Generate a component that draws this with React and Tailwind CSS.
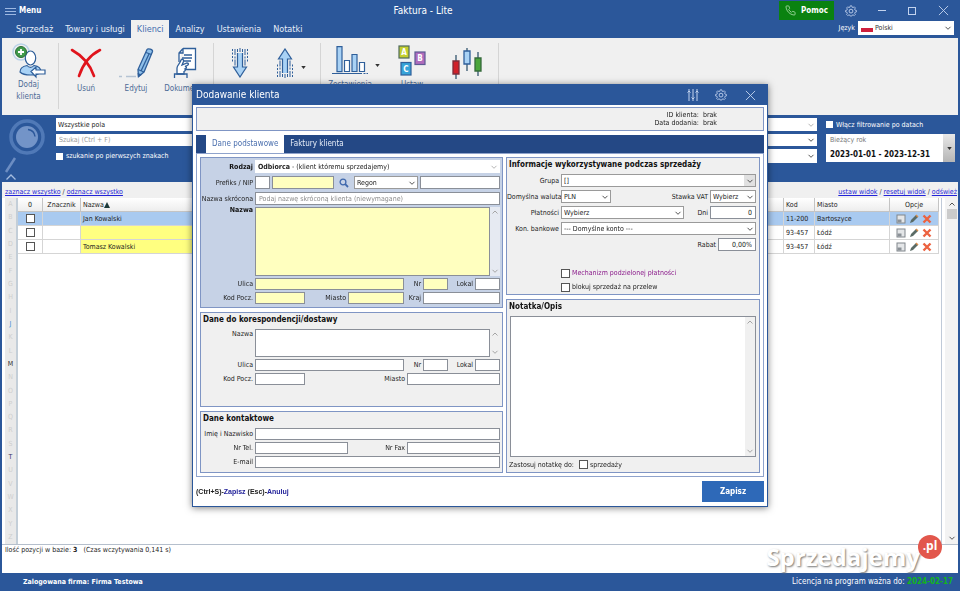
import React, { useState } from 'react';

const menuTabs = ['Sprzedaż', 'Towary i usługi', 'Klienci', 'Analizy', 'Ustawienia', 'Notatki'];

const clients = [
  { name: 'Jan Kowalski', code: '11-200', city: 'Bartoszyce', selected: true },
  { name: '', code: '93-457', city: 'Łódź' },
  { name: 'Tomasz Kowalski', code: '93-457', city: 'Łódź' },
];

const letters = 'ABCDEFGHIJKLMNOPQRSTUVWXYZ'.split('');
const letterColors = { J: 'text-[#3b8fd6]', M: 'text-[#333333]', T: 'text-[#333366]' };

const Chevron = ({ className = 'text-[#555555]', up = false }) => (
  <svg viewBox="0 0 8 8" className={`w-2 h-2 shrink-0 ${className}`} fill="none" stroke="currentColor" strokeWidth="1">
    <path d={up ? 'M1.5 5.5 4 3l2.5 2.5' : 'M1.5 2.8 4 5.3l2.5-2.5'} />
  </svg>
);

const Caret = () => (
  <svg viewBox="0 0 6 4" className="w-[5px] h-[3px]"><path d="M0 0h6L3 4z" fill="#333" /></svg>
);

const Gear = ({ className }) => (
  <svg viewBox="0 0 24 24" className={className} fill="none" stroke="#c3d3ee" strokeWidth="1.8" strokeLinejoin="round">
    <path d="M9.500 4.200 10.300 1h3.400l.8 3.200 2 .8L19.300 3.300l2.400 2.400L20 8.500l.8 2 3.200.8v3.400l-3.200.8-.8 2 1.700 2.800-2.400 2.400-2.800-1.700-2 .8-.8 2h-3.400l-.8-2-2-.8-2.800 1.700-2.400-2.400L4 17.500l-.8-2-3.200-.8v-3.400l3.200-.8.8-2-1.700-2.800 2.400-2.400L7.500 5z" transform="translate(1.200 .7) scale(.9)" />
    <circle cx="12" cy="12.200" r="3.800" />
  </svg>
);

const CloseIcon = () => (
  <svg viewBox="0 0 12 12" className="w-[11px] h-[11px]" stroke="#c3d3ee" strokeWidth="1"><path d="M1 1l10 10M11 1 1 11" /></svg>
);

// Plain bordered text box used across the form
const TextBox = ({ className = '', yellow = false, ...rest }) => (
  <input
    type="text"
    className={`min-w-0 h-full border border-[#8a8f98] px-[3px] outline-none placeholder:text-[#8c8c8c] ${yellow ? 'bg-[#ffffbf]' : 'bg-white'} ${className}`}
    {...rest}
  />
);

const Select = ({ id, value, className = '', boxClass = 'border border-[#9a9a9a]', chevronClass, chevronBox = '', label, children }) => (
  <div className={`relative h-full min-w-0 bg-white ${className}`}>
    <select id={id} aria-label={label} className={`block w-full h-full appearance-none pl-[2px] pr-3 outline-none ${boxClass}`} defaultValue={value}>
      <option value={value}>{value}</option>
    </select>
    {children}
    <span className={`absolute right-px inset-y-px w-[11px] flex items-center justify-center pointer-events-none ${chevronBox}`}>
      <Chevron className={chevronClass} />
    </span>
  </div>
);

const Label = ({ htmlFor, className = 'w-[54px]', children }) => (
  <label htmlFor={htmlFor} className={`shrink-0 text-right pr-[2px] whitespace-nowrap ${className}`}>{children}</label>
);

const Row = ({ className = 'h-3', children }) => (
  <div className={`flex items-center ${className}`}>{children}</div>
);

const Panel = ({ title, className = 'bg-[#f0f0f0]', children }) => (
  <section className={`border border-[#7f95c4] ${className}`}>
    {title && <h3 className="h-[15px] px-[2px] text-[8px] leading-[14px] font-bold text-[#111111]">{title}</h3>}
    {children}
  </section>
);

const ScrollHints = () => (
  <div className="w-[10px] shrink-0 flex flex-col items-center justify-between py-[1px]">
    <Chevron up className="text-[#a5a5a5]" />
    <Chevron className="text-[#a5a5a5]" />
  </div>
);

const AddClientIcon = () => (
  <svg viewBox="0 0 34 36" className="w-[34px] h-9" fill="none">
    <circle cx="9" cy="9" r="8" stroke="#b9d2e8" strokeWidth="1.500" />
    <ellipse cx="18.500" cy="15" rx="5.200" ry="7" fill="#fff" stroke="#2f5f9a" strokeWidth="1.200" />
    <path d="M8 29c0-4 4-6 7-6.500 2 2.500 5 2.500 7 0 4 .5 7 2.500 7 6.500-4 4-17 4-21 0z" fill="#a9d2f5" stroke="#2f5f9a" strokeWidth="1.200" />
    <path d="M19 28.500 24 24v3h9v4h-9v3z" fill="#fff" stroke="#2f5f9a" strokeWidth="1.200" />
    <circle cx="9" cy="9" r="5.500" fill="#3f9b4a" stroke="#2c6b37" />
    <path d="M9 6v6M6 9h6" stroke="#fff" strokeWidth="1.800" />
  </svg>
);

const DeleteIcon = () => (
  <svg viewBox="0 0 32 30" className="w-8 h-[30px]" fill="none" stroke="#e0141c" strokeLinecap="round">
    <path d="M2 2c9 5 18 14 22 26" strokeWidth="2.600" />
    <path d="M30 2C20 7 13 16 9 28" strokeWidth="2.600" />
  </svg>
);

const PencilIcon = () => (
  <svg viewBox="0 0 36 32" className="w-9 h-8" fill="none" stroke="#2f5f9a" strokeWidth="1.300">
    <path d="M1 29.500h3M8 29.500h10" stroke="#b5c3d3" />
    <path d="M29 2.500c1-1.500 6 0 5.500 2L26 25l-5.500 4.500-.5-7z" fill="#8fc0ea" />
    <path d="M28 5.500l5.500 2M20 22.500l6 2.500M31 7l-8 17" />
    <path d="M20.300 27l.2 2.500 2.300-1.800z" fill="#2f5f9a" />
  </svg>
);

const DocumentIcon = () => (
  <svg viewBox="0 0 24 32" className="w-6 h-8" fill="none" stroke="#2f5f9a" strokeWidth="1.300">
    <path d="M10 1.500h12.500v21H12M10 1.500 6 6v9M10 1.500V6H6" fill="#fff" />
    <path d="M11 8h8M9 11h10M11 14h7" />
    <path d="M4 27v-6c0-3 3-4 4-8 1-1.500 3-.5 2.500 1.500L9 18l5-2c2 0 2 2 0 2.500l-2 1c2 0 2 2 0 2.500 1 1 0 2-1 2.500V27z" fill="#fff" />
    <path d="M1.500 31v-4H14v4" />
  </svg>
);

const TransferIcon = ({ up = false }) => (
  <svg viewBox="0 0 18 30" className={`w-[18px] h-[30px] ${up ? 'rotate-180' : ''}`} fill="none" stroke="#2f5f9a">
    <path d="M1.500 1v14M16.500 1v14" strokeDasharray="2 1.500" />
    <path d="M4 1v17M14 1v17" strokeDasharray="6 1.500 2 1" />
    <path d="M6.500 5v14H2.500L9 29l6.500-10h-4V5" fill="#a9d2f5" strokeWidth="1.200" />
    <path d="M6.500 1v3M9 0v4M11.500 1v3" />
  </svg>
);

const ChartIcon = () => (
  <svg viewBox="0 0 36 30" className="w-9 h-[30px]" stroke="#2f5f9a" strokeWidth="1.200">
    <path d="M0 27.500h36" strokeDasharray="30 1.500 2 1" />
    <path d="M5 .6h5v25H5zM20 8.500h5v17h-5z" fill="#a9d2f5" />
    <path d="M12.500 14.500h5v11h-5zM27.500 16.500h5v9h-5z" fill="#fff" />
  </svg>
);

const SetsIcon = () => (
  <svg viewBox="0 0 28 32" className="w-7 h-8" strokeWidth="1.200" fontFamily="DejaVu Sans Condensed, sans-serif" fontWeight="bold" fontSize="8" textAnchor="middle">
    <rect x="1" y="1" width="10" height="12" fill="#c4cf2d" stroke="#4f6a5c" />
    <rect x="17" y="7" width="10" height="12.500" fill="#b06cbc" stroke="#5d5a94" />
    <rect x="3" y="17.500" width="10" height="12.500" fill="#37a3d8" stroke="#2f5f9a" />
    <text x="6" y="10" fill="#fff">A</text>
    <text x="22" y="16" fill="#fff">B</text>
    <text x="8" y="27" fill="#fff">C</text>
  </svg>
);

const CandlesIcon = () => (
  <svg viewBox="0 0 30 32" className="w-[30px] h-8" strokeWidth="1.300">
    <path d="M4 8v24M15 1v23M26 5v24" stroke="#35566f" />
    <path d="M1 14h6v13H1z" fill="#d0202a" stroke="#7c2c3b" />
    <path d="M12 4h6v13h-6z" fill="#a9d2f5" stroke="#2f5f9a" />
    <path d="M23 11h6v13h-6z" fill="#4aa53a" stroke="#35693b" />
  </svg>
);

const Tool = ({ icon, label, name, className, high = false, caret = false }) => (
  <button type="button" aria-label={name} className={`flex flex-col items-center shrink-0 text-[8px] leading-3 text-[#4d6b96] ${className}`}>
    <span className={`flex items-center justify-center gap-[7px] ${high ? 'h-9' : 'h-10'}`}>
      {icon}
      {caret && <span className="-mr-3 pt-2"><Caret /></span>}
    </span>
    {label && <span>{label}</span>}
  </button>
);

const Separator = () => <div className="w-px shrink-0 h-[66px] bg-[#d5d5d5]" />;

const RowActions = () => (
  <div className="flex items-center justify-center gap-[3px]">
    <button type="button" aria-label="Podgląd">
      <svg viewBox="0 0 10 10" className="w-[10px] h-[10px]">
        <rect x="1" y="1" width="8" height="8" fill="#e4e6e8" stroke="#80868c" />
        <path d="M1.500 5.500h4v3h-4z" fill="#8b9197" />
      </svg>
    </button>
    <button type="button" aria-label="Edytuj">
      <svg viewBox="0 0 10 10" className="w-[10px] h-[10px]">
        <path d="M1 9l1-3 5-5 2 2-5 5z" fill="#5a6b66" />
        <path d="M6.500 1.500l1-1 2 2-1 1z" fill="#d98b4a" />
      </svg>
    </button>
    <button type="button" aria-label="Usuń">
      <svg viewBox="0 0 10 10" className="w-[10px] h-[10px]" stroke="#ec6240" strokeWidth="2.400"><path d="M1.500 1.500l7 7M8.500 1.500l-7 7" /></svg>
    </button>
  </div>
);

const TitleBar = () => (
  <header className="text-white">
    <div className="h-[21px] flex items-center">
      <div className="w-[41%] pl-[5px]">
        <button type="button" className="flex items-center gap-[3px] text-[8px] font-bold">
          <svg viewBox="0 0 11 8" className="w-[11px] h-2" stroke="#9db8e2"><path d="M0 1.500h11M0 4.500h11M0 7.500h11" /></svg>
          Menu
        </button>
      </div>
      <h1 className="text-[10px]">Faktura - Lite</h1>
      <div className="flex-1 flex items-center justify-end">
        <button type="button" className="h-[19px] w-[55px] bg-[#0a8210] flex items-center justify-center gap-[5px] text-[8px] font-bold">
          <svg viewBox="0 0 24 24" className="w-[11px] h-[11px]" fill="none" stroke="#9bd59b" strokeWidth="2">
            <path d="M22 16.920v3a2 2 0 0 1-2.180 2 19.790 19.790 0 0 1-8.630-3.070 19.500 19.500 0 0 1-6-6A19.790 19.790 0 0 1 2.120 4.180 2 2 0 0 1 4.110 2h3a2 2 0 0 1 2 1.720c.13.96.36 1.900.7 2.810a2 2 0 0 1-.45 2.110L8.090 9.910a16 16 0 0 0 6 6l1.270-1.270a2 2 0 0 1 2.110-.45c.91.34 1.850.57 2.810.7A2 2 0 0 1 22 16.920z" />
          </svg>
          Pomoc
        </button>
        <button type="button" aria-label="Opcje programu" className="w-[34px] flex justify-center"><Gear className="w-3 h-3" /></button>
        <button type="button" aria-label="Minimalizuj" className="w-[28px] flex justify-center"><span className="w-2 h-px bg-[#c3d3ee]" /></button>
        <button type="button" aria-label="Maksymalizuj" className="w-[31px] flex justify-center"><span className="w-2 h-2 border border-[#c3d3ee]" /></button>
        <button type="button" aria-label="Zamknij" className="w-[33px] flex justify-center"><CloseIcon /></button>
      </div>
    </div>
    <div className="h-[17px] flex items-end pl-[10px] pr-[6px]">
      <nav className="flex-1 flex text-[9px]">
        {menuTabs.map((tab) => (
          <a
            key={tab}
            href="#"
            className={`h-[18px] px-[6px] leading-[18px] ${tab === 'Klienci' ? 'bg-[#f0f0f0] text-[#3f6cae]' : 'text-[#e6edf8]'}`}
          >
            {tab}
          </a>
        ))}
      </nav>
      <div className="h-[17px] flex items-start gap-[3px]">
        <label htmlFor="language" className="leading-[15px]">Język</label>
        <div className="relative w-24 h-[14px] bg-white text-[#333333]">
          <select id="language" className="block w-full h-full appearance-none pl-[17px] outline-none" defaultValue="Polski">
            <option>Polski</option>
          </select>
          <span className="absolute left-[3px] top-[3px] w-3 h-2 bg-gradient-to-b from-white from-50% to-[#cf1f3c] to-50% pointer-events-none" />
          <span className="absolute right-[2px] inset-y-0 flex items-center pointer-events-none"><Chevron /></span>
        </div>
      </div>
    </div>
  </header>
);

const Ribbon = () => (
  <div className="h-[77px] shrink-0 bg-[#f0f0f0] flex items-start pt-[5px] overflow-hidden">
    <Tool className="w-[53px]" icon={<AddClientIcon />} label={<>Dodaj<br />klienta</>} high />
    <div className="w-[3px]" />
    <Separator />
    <Tool className="w-[54px]" icon={<DeleteIcon />} label="Usuń" />
    <Tool className="w-[46px]" icon={<PencilIcon />} label="Edytuj" />
    <Tool className="w-[52px]" icon={<DocumentIcon />} label="Dokumenty" />
    <div className="w-[2px]" />
    <Separator />
    <Tool className="w-[52px]" icon={<TransferIcon />} name="Import" />
    <Tool className="w-[38px]" icon={<TransferIcon up />} name="Eksport" caret />
    <div className="w-[16px]" />
    <Separator />
    <Tool className="w-[58px]" icon={<ChartIcon />} label="Zestawienia" high caret />
    <Tool className="w-[66px]" icon={<SetsIcon />} label="Ustaw" high />
    <Tool className="w-[44px]" icon={<CandlesIcon />} name="Analiza" />
    <div className="w-[9px]" />
    <Separator />
  </div>
);

const SearchPanel = () => (
  <section className="h-[67px] shrink-0 ml-px bg-[#2b579a] text-white flex">
    <div className="w-[53px] shrink-0">
      <svg viewBox="0 0 53 67" className="w-[53px] h-[67px]" fill="none">
        <circle cx="24" cy="22" r="16" stroke="#5079b7" strokeWidth="3.500" />
        <circle cx="24" cy="22" r="11" fill="#7394c8" />
        <path d="M25 14.500c4 .5 6.500 3 7 7" stroke="#2b579a" strokeWidth="1.500" />
        <path d="M12 43 3 57" stroke="#6c8dc2" strokeWidth="2.500" />
        <path d="M3.500 64.500 8 60l4.500 4.500" stroke="#a5bcdf" strokeWidth="1.300" />
      </svg>
    </div>
    <div className="flex-1 flex flex-col gap-[3px] pt-[3px] text-[#222222]">
      <div className="h-[13px]"><Select label="Pole wyszukiwania" value="Wszystkie pola" boxClass="" className="w-full" /></div>
      <div className="h-3"><input aria-label="Szukaj" placeholder="Szukaj (Ctrl + F)" className="block w-full h-full px-[3px] bg-white outline-none placeholder:text-[#9a9a9a]" /></div>
      <label className="h-[14px] flex items-center gap-[3px] text-white">
        <input type="checkbox" className="appearance-none w-[7px] h-[7px] bg-white" />
        szukanie po pierwszych znakach
      </label>
    </div>
    <div className="flex-1 flex flex-col gap-[3px] pt-[3px] pl-2 text-[#222222]">
      <div className="h-[13px]"><Select label="Grupa klientów" value="" boxClass="" chevronClass="text-[#b5b5b5]" /></div>
      <div className="h-3"><Select label="Rodzaj klienta" value="" boxClass="" /></div>
      <div className="h-[14px]"><Select label="Znacznik" value="" boxClass="" /></div>
    </div>
    <div className="w-[141px] shrink-0 pl-[9px] pr-[3px] flex flex-col gap-[3px] pt-[3px]">
      <label className="h-[13px] flex items-center gap-[3px]">
        <input type="checkbox" className="appearance-none w-[7px] h-[7px] bg-white" />
        Włącz filtrowanie po datach
      </label>
      <div className="h-7 flex bg-white">
        <div className="flex-1 pl-1 whitespace-nowrap">
          <p className="pt-px leading-[11px] text-[#777777]">Bieżący rok</p>
          <p className="pt-[3px] text-[8px] leading-[12px] font-bold text-[#111111]">2023-01-01 - 2023-12-31</p>
        </div>
        <button type="button" aria-label="Wybierz okres" className="w-3 bg-gradient-to-b from-[#e8e8e8] to-[#b5b5b5] flex items-center justify-center"><Caret /></button>
      </div>
    </div>
  </section>
);

const th = 'h-[14px] border-r border-b border-[#c4c4c4] font-normal bg-gradient-to-b from-white to-[#ededed]';
const td = 'h-[14px] border-r border-b border-[#d5d5d5]';

const ClientTable = () => (
  <table className="w-full table-fixed border-separate border-spacing-0 text-left text-[#222222]">
    <colgroup>
      <col className="w-[25px]" />
      <col className="w-[38px]" />
      <col className="w-[320px]" />
      <col />
      <col className="w-[31px]" />
      <col className="w-[75px]" />
      <col className="w-[49px]" />
    </colgroup>
    <thead>
      <tr>
        <th className={`${th} text-center`}>0</th>
        <th className={`${th} text-center`}>Znacznik</th>
        <th className={`${th} pl-[2px]`}>
          <span className="flex items-center">
            Nazwa
            <svg viewBox="0 0 6 6" className="w-[6px] h-[6px]"><path d="M3 0l3 6H0z" fill="#1d3b3b" /></svg>
          </span>
        </th>
        <th className={th} />
        <th className={`${th} pl-[2px]`}>Kod</th>
        <th className={`${th} pl-[2px]`}>Miasto</th>
        <th className={`${th} text-center`}>Opcje</th>
      </tr>
    </thead>
    <tbody>
      {clients.map((client, i) => (
        <tr key={i} className={client.selected ? 'bg-[#a9caf0]' : 'bg-white'}>
          <td className={td}>
            <input type="checkbox" aria-label={`Zaznacz wiersz ${i + 1}`} className="block mx-auto appearance-none w-[9px] h-[9px] bg-white border border-[#555555]" />
          </td>
          <td className={td} />
          <td className={`${td} pl-[2px] ${client.selected ? '' : 'bg-[#ffff80]'}`}>{client.name}</td>
          <td className={td} />
          <td className={`${td} pl-[2px]`}>{client.code}</td>
          <td className={`${td} pl-[2px]`}>{client.city}</td>
          <td className={td}><RowActions /></td>
        </tr>
      ))}
    </tbody>
  </table>
);

const ClientList = () => (
  <main className="flex-1 flex flex-col bg-white">
    <div className="h-4 shrink-0 bg-[#f0f0f0] pl-[3px] pr-px pt-[5px] flex justify-between leading-[10px] text-[#333333]">
      <p>
        <a href="#" className="text-[#2323d8] underline">zaznacz wszystko</a> / <a href="#" className="text-[#2323d8] underline">odznacz wszystko</a>
      </p>
      <p>
        <a href="#" className="text-[#2323d8] underline">ustaw widok</a> / <a href="#" className="text-[#2323d8] underline">resetuj widok</a> / <a href="#" className="text-[#2323d8] underline">odśwież</a>
      </p>
    </div>
    <div className="flex-1 flex pl-[3px] border-b border-[#b5bfcc]">
      <div className="w-[13px] shrink-0 flex flex-col bg-[#e9e9e9] border-r-2 border-[#c3ced8]">
        {letters.map((letter) => (
          <button key={letter} type="button" className={`flex-1 leading-[13px] ${letterColors[letter] || 'text-[#cfcfcf]'}`}>{letter}</button>
        ))}
      </div>
      <div className="flex-1 min-w-0"><ClientTable /></div>
      <div className="w-[2px] ml-px border-r border-[#c0cad8]" />
      <div className="w-[13px] ml-[3px] shrink-0 flex flex-col items-center justify-between bg-[#f3f3f3] py-[2px]">
        <div className="w-full flex flex-col items-center gap-[1px]">
          <Chevron up />
          <span className="w-[10px] h-[10px] bg-[#cbcbcb]" />
        </div>
        <Chevron />
      </div>
    </div>
    <div className="h-7 shrink-0 pl-[3px] leading-[10px] text-[#222222]">
      Ilość pozycji w bazie: <b>3</b> &nbsp; (Czas wczytywania 0,141 s)
    </div>
  </main>
);

const MainDataPanel = () => (
  <Panel className="bg-[#c6d2e6]">
    <div className="flex flex-col gap-[2px] pt-[2px] pb-[3px] pr-[2px]">
      <div className="flex flex-col gap-[3px]">
        <Row className="h-[13px]">
          <Label htmlFor="kind"><b className="text-[#111111]">Rodzaj</b></Label>
          <Select id="kind" value="Odbiorca - (klient któremu sprzedajemy)" className="flex-1 text-transparent" boxClass="" chevronClass="text-[#b5b5b5]">
            <span className="absolute left-[3px] inset-y-0 flex items-center whitespace-pre text-[#222222] pointer-events-none"><b>Odbiorca</b> - (klient któremu sprzedajemy)</span>
          </Select>
        </Row>
        <Row className="h-[13px]">
          <Label htmlFor="nip">Prefiks / NIP</Label>
          <TextBox aria-label="Prefiks" className="w-[15px]" />
          <TextBox id="nip" yellow className="flex-1 ml-[2px]" />
          <button type="button" aria-label="Szukaj" className="w-5 flex justify-center">
            <svg viewBox="0 0 10 10" className="w-[10px] h-[10px]" fill="none" stroke="#3f68ad" strokeWidth="1.300"><circle cx="4" cy="4" r="2.900" /><path d="M6.200 6.200 9 9" strokeWidth="1.800" /></svg>
          </button>
          <Select label="Rodzaj numeru" value="Regon" className="w-16" />
          <TextBox aria-label="Regon" className="w-20 ml-[2px]" />
        </Row>
        <Row className="h-[13px]">
          <Label htmlFor="shortname">Nazwa skrócona</Label>
          <TextBox id="shortname" placeholder="Podaj nazwę skróconą klienta (niewymagane)" className="flex-1" />
        </Row>
      </div>
      <div className="h-[69px] flex leading-[6px]">
        <Label htmlFor="name"><b className="text-[#111111]">Nazwa</b></Label>
        <textarea id="name" className="flex-1 min-w-0 resize-none border border-[#8a8f98] bg-[#ffffbf] outline-none" />
        <div className="flex bg-[#e6eaf2]"><ScrollHints /></div>
      </div>
      <Row>
        <Label htmlFor="street">Ulica</Label>
        <TextBox id="street" yellow className="flex-1" />
        <Label htmlFor="number" className="w-[19px]">Nr</Label>
        <TextBox id="number" yellow className="w-[25px]" />
        <Label htmlFor="flat" className="w-[27px]">Lokal</Label>
        <TextBox id="flat" className="w-[25px]" />
      </Row>
      <Row>
        <Label htmlFor="zip">Kod Pocz.</Label>
        <TextBox id="zip" yellow className="w-[50px]" />
        <Label htmlFor="city" className="w-[43px]">Miasto</Label>
        <TextBox id="city" yellow className="flex-1" />
        <Label htmlFor="country" className="w-[19px]">Kraj</Label>
        <TextBox id="country" className="w-[77px]" />
      </Row>
    </div>
  </Panel>
);

const DeliveryPanel = () => (
  <Panel title="Dane do korespondencji/dostawy">
    <div className="flex flex-col gap-[2px] pt-px pb-[21px] pr-[2px]">
      <div className="h-7 flex">
        <Label htmlFor="d-name">Nazwa</Label>
        <textarea id="d-name" className="flex-1 min-w-0 resize-none border border-[#8a8f98] bg-white outline-none" />
        <ScrollHints />
      </div>
      <Row>
        <Label htmlFor="d-street">Ulica</Label>
        <TextBox id="d-street" className="flex-1" />
        <Label htmlFor="d-number" className="w-[19px]">Nr</Label>
        <TextBox id="d-number" className="w-[25px]" />
        <Label htmlFor="d-flat" className="w-[27px]">Lokal</Label>
        <TextBox id="d-flat" className="w-[25px]" />
      </Row>
      <Row>
        <Label htmlFor="d-zip">Kod Pocz.</Label>
        <TextBox id="d-zip" className="w-[50px]" />
        <Label htmlFor="d-city" className="flex-1">Miasto</Label>
        <TextBox id="d-city" className="w-[93px]" />
      </Row>
    </div>
  </Panel>
);

const ContactPanel = () => (
  <Panel title="Dane kontaktowe">
    <div className="flex flex-col gap-[2px] pt-px pb-[4px] pr-[2px]">
      <Row>
        <Label htmlFor="person">Imię i Nazwisko</Label>
        <TextBox id="person" className="flex-1" />
      </Row>
      <Row>
        <Label htmlFor="phone">Nr Tel.</Label>
        <TextBox id="phone" className="w-[93px]" />
        <Label htmlFor="fax" className="flex-1">Nr Fax</Label>
        <TextBox id="fax" className="w-[93px]" />
      </Row>
      <Row>
        <Label htmlFor="email">E-mail</Label>
        <TextBox id="email" type="email" className="flex-1" />
      </Row>
    </div>
  </Panel>
);

const SalesPanel = () => (
  <Panel title="Informacje wykorzystywane podczas sprzedaży">
    <div className="flex flex-col gap-[3px] pt-px pr-[3px]">
      <Row className="h-[13px]">
        <Label htmlFor="group">Grupa</Label>
        <Select id="group" value="[]" className="flex-1" chevronBox="bg-[#e1e1e1]" />
      </Row>
      <Row className="h-[13px]">
        <Label htmlFor="currency">Domyślna waluta</Label>
        <Select id="currency" value="PLN" className="w-[50px]" />
        <Label htmlFor="vat" className="flex-1">Stawka VAT</Label>
        <Select id="vat" value="Wybierz" className="w-[46px]" />
      </Row>
      <Row className="h-[13px]">
        <Label htmlFor="payment">Płatności</Label>
        <Select id="payment" value="Wybierz" className="flex-1" />
        <Label htmlFor="days" className="w-[26px]">Dni</Label>
        <TextBox id="days" defaultValue="0" className="w-[46px] text-right" />
      </Row>
      <Row className="h-[13px]">
        <Label htmlFor="account">Kon. bankowe</Label>
        <Select id="account" value="--- Domyślne konto ---" className="flex-1" />
      </Row>
      <Row className="h-[13px]">
        <Label htmlFor="discount" className="flex-1">Rabat</Label>
        <TextBox id="discount" defaultValue="0,00%" className="w-[38px] text-right" />
      </Row>
    </div>
    <div className="flex flex-col gap-[2px] pt-4 pb-px pl-[54px]">
      <label className="h-3 flex items-center gap-[2px] text-[#8a1a8a]">
        <input type="checkbox" className="appearance-none w-[9px] h-[9px] bg-white border border-[#555555]" />
        Mechanizm podzielonej płatności
      </label>
      <label className="h-3 flex items-center gap-[2px]">
        <input type="checkbox" className="appearance-none w-[9px] h-[9px] bg-white border border-[#555555]" />
        blokuj sprzedaż na przelew
      </label>
    </div>
  </Panel>
);

const NotePanel = () => (
  <Panel title="Notatka/Opis" className="flex-1 flex flex-col bg-[#f0f0f0]">
    <div className="flex-1 mt-px mx-[3px] flex border border-[#8a8f98] bg-white">
      <textarea aria-label="Notatka/Opis" className="flex-1 min-w-0 resize-none outline-none" />
      <div className="flex bg-[#f0f0f0]"><ScrollHints /></div>
    </div>
    <div className="h-[15px] flex items-center gap-[5px] pl-[2px]">
      Zastosuj notatkę do:
      <label className="flex items-center gap-[2px]">
        <input type="checkbox" className="appearance-none w-[9px] h-[9px] bg-white border border-[#555555]" />
        sprzedaży
      </label>
    </div>
  </Panel>
);

const AddClientDialog = () => {
  const [tab, setTab] = useState('Dane podstawowe');

  return (
    <div className="fixed inset-0 flex items-center justify-center">
      <div role="dialog" aria-label="Dodawanie klienta" className="w-3/5 border border-[#2b579a] bg-white shadow-[0_1px_7px_rgba(0,0,0,0.5)]">
        <div className="h-5 pl-[3px] pr-[11px] flex items-center bg-[#2b579a] text-white">
          <h2 className="flex-1 text-[10px]">Dodawanie klienta</h2>
          <button type="button" aria-label="Kolumny" className="mr-4">
            <svg viewBox="0 0 12 12" className="w-3 h-3" fill="none" stroke="#c3d3ee">
              <path d="M2 0v12M6 0v12M10 0v12M.5 3.500 2 2l1.500 1.500M4.500 8.500 6 10l1.500-1.500M8.500 3.500 10 2l1.500 1.500" />
            </svg>
          </button>
          <button type="button" aria-label="Ustawienia" className="mr-[18px]"><Gear className="w-3 h-3" /></button>
          <button type="button" aria-label="Zamknij"><CloseIcon /></button>
        </div>
        <div className="px-[3px] pt-[2px] text-[#222222]">
          <div className="h-6 mb-1 pr-[46px] flex flex-col items-end justify-center border border-[#7f95c4] bg-[#f0f0f0] leading-[8px]">
            <p>ID klienta:&nbsp; brak</p>
            <p>Data dodania:&nbsp; brak</p>
          </div>
          <div role="tablist" className="h-[18px] flex pl-[10px] bg-[#244885] text-[8px]">
            {['Dane podstawowe', 'Faktury klienta'].map((name) => (
              <button
                key={name}
                type="button"
                role="tab"
                aria-selected={tab === name}
                onClick={() => setTab(name)}
                className={`px-[6px] ${tab === name ? 'bg-white text-[#4a6fae]' : 'text-[#e6edf8]'}`}
              >
                {name}
              </button>
            ))}
          </div>
          <form className="grid grid-cols-[303fr_254fr] gap-[3px] p-[3px] border border-[#8fa3cc]">
            <div className="flex flex-col gap-1 min-w-0">
              <MainDataPanel />
              <DeliveryPanel />
              <ContactPanel />
            </div>
            <div className="flex flex-col gap-1 min-w-0">
              <SalesPanel />
              <NotePanel />
            </div>
          </form>
          <div className="h-[29px] flex items-center justify-between">
            <p className="font-['Liberation_Sans'] font-bold">
              (Ctrl+S)-<span className="text-[#22229a]">Zapisz</span> (Esc)-<span className="text-[#22229a]">Anuluj</span>
            </p>
            <button type="submit" className="w-[62px] h-[21px] bg-[#2e69b8] text-[8px] font-bold text-white">Zapisz</button>
          </div>
        </div>
      </div>
    </div>
  );
};

const App = () => (
  <div className="min-h-screen flex flex-col bg-[#2b579a] font-['DejaVu_Sans_Condensed','DejaVu_Sans',sans-serif] text-[7px] leading-[10px]">
    <TitleBar />
    <div className="flex-1 flex flex-col mx-[2px]">
      <Ribbon />
      <SearchPanel />
      <ClientList />
    </div>
    <footer className="relative h-[18px] shrink-0 flex items-center justify-between pl-[23px] pr-[7px] text-white">
      <p className="font-bold">Zalogowana firma: Firma Testowa</p>
      <p className="text-[8px]">Licencja na program ważna do: <b className="text-[#12b51c]">2024-02-17</b></p>
      <div className="absolute right-[18px] bottom-[18px] flex items-start pointer-events-none font-['Open_Sans'] font-bold">
        <span className="pt-[6px] text-[24px] leading-[32px] text-white [text-shadow:1px_1px_2px_#777777]">Sprzedajemy</span>
        <span className="-ml-[2px] w-6 h-6 rounded-full bg-[#e2574c] text-[12px] leading-[22px] text-center">.pl</span>
      </div>
    </footer>
    <AddClientDialog />
  </div>
);

export default App;
